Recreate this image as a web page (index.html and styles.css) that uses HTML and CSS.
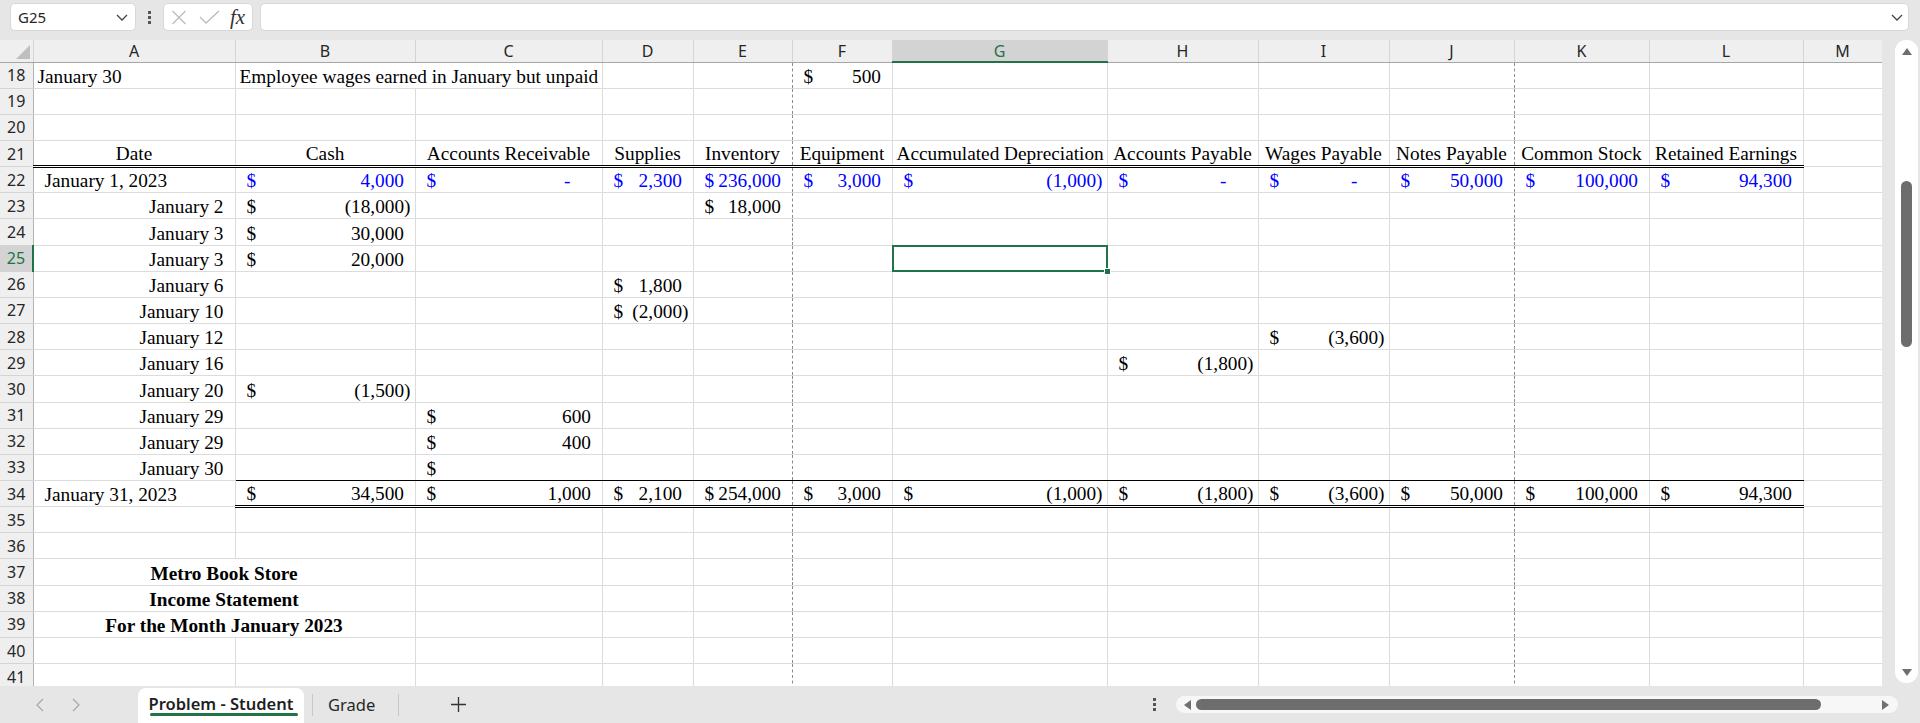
FILE: index.html
```html
<!DOCTYPE html>
<html lang="en">
    <head>
        <meta charset="utf-8">
        <title>Problem - Student</title>

        <link rel="stylesheet" href="styles.css">
    </head>

    <body>
        <div class="topbar">
            <div class="namebox">
                <span>G25</span>
                <svg class="chev" width="12" height="7" viewBox="0 0 12 7"><path d="M1 1l5 5 5-5"/></svg>
            </div>

            <div class="grip"><i></i><i></i><i></i></div>

            <div class="fxbox">
                <svg class="cancel" width="16" height="15" viewBox="0 0 16 15"><path d="M1.5 1l13 13M14.5 1l-13 13"/></svg>
                <svg class="enter" width="21" height="14" viewBox="0 0 21 14"><path d="M1 7l6 6L20 1"/></svg>
                <span class="fx">fx</span>
            </div>

            <div class="formula">
                <svg class="chev" width="12" height="7" viewBox="0 0 12 7"><path d="M1 1l5 5 5-5"/></svg>
            </div>
        </div>

        <div class="main">
            <div class="sheet">
                <table class="grid">
                    <colgroup>
                        <col class="w-rh"><col class="w-a"><col class="w-b"><col class="w-c"><col class="w-d"><col class="w-e"><col class="w-f">
                        <col class="w-g"><col class="w-h"><col class="w-i"><col class="w-j"><col class="w-k"><col class="w-l"><col class="w-m">
                    </colgroup>

                    <thead>
                        <tr>
                            <th class="corner"><svg width="14" height="14" viewBox="0 0 14 14"><path d="M14 0V14H0z"/></svg></th>
                            <th>A</th><th>B</th><th>C</th><th>D</th><th>E</th><th>F</th>
                            <th class="on">G</th><th>H</th><th>I</th><th>J</th><th>K</th><th>L</th><th>M</th>
                        </tr>
                    </thead>

                    <tbody>
                        <tr>
                            <th>18</th>
                            <td>January 30</td>
                            <td class="spill">Employee wages earned in January but unpaid</td>
                            <td></td><td></td><td class="pb"></td>
                            <td class="num"><span class="cur">$</span>500</td>
                            <td></td><td></td><td></td><td class="pb"></td><td></td><td></td><td></td>
                        </tr>
                        <tr>
                            <th>19</th>
                            <td></td><td></td><td></td><td></td><td class="pb"></td><td></td><td></td><td></td><td></td><td class="pb"></td><td></td><td></td><td></td>
                        </tr>
                        <tr>
                            <th>20</th>
                            <td></td><td></td><td></td><td></td><td class="pb"></td><td></td><td></td><td></td><td></td><td class="pb"></td><td></td><td></td><td></td>
                        </tr>
                        <tr>
                            <th>21</th>
                            <td class="ctr hd">Date</td>
                            <td class="ctr hd">Cash</td>
                            <td class="ctr hd">Accounts Receivable</td>
                            <td class="ctr hd">Supplies</td>
                            <td class="ctr hd pb">Inventory</td>
                            <td class="ctr hd">Equipment</td>
                            <td class="ctr hd">Accumulated Depreciation</td>
                            <td class="ctr hd">Accounts Payable</td>
                            <td class="ctr hd">Wages Payable</td>
                            <td class="ctr hd pb">Notes Payable</td>
                            <td class="ctr hd">Common Stock</td>
                            <td class="ctr hd">Retained Earnings</td>
                            <td></td>
                        </tr>
                        <tr class="blue">
                            <th>22</th>
                            <td class="ind">January 1, 2023</td>
                            <td class="num"><span class="cur">$</span>4,000</td>
                            <td class="num zero"><span class="cur">$</span>-</td>
                            <td class="num"><span class="cur">$</span>2,300</td>
                            <td class="num pb"><span class="cur">$</span>236,000</td>
                            <td class="num"><span class="cur">$</span>3,000</td>
                            <td class="num neg"><span class="cur">$</span>(1,000)</td>
                            <td class="num zero"><span class="cur">$</span>-</td>
                            <td class="num zero"><span class="cur">$</span>-</td>
                            <td class="num pb"><span class="cur">$</span>50,000</td>
                            <td class="num"><span class="cur">$</span>100,000</td>
                            <td class="num"><span class="cur">$</span>94,300</td>
                            <td></td>
                        </tr>
                        <tr>
                            <th>23</th>
                            <td class="rt">January 2</td>
                            <td class="num neg"><span class="cur">$</span>(18,000)</td>
                            <td></td><td></td>
                            <td class="num pb"><span class="cur">$</span>18,000</td>
                            <td></td><td></td><td></td><td></td><td class="pb"></td><td></td><td></td><td></td>
                        </tr>
                        <tr>
                            <th>24</th>
                            <td class="rt">January 3</td>
                            <td class="num"><span class="cur">$</span>30,000</td>
                            <td></td><td></td><td class="pb"></td><td></td><td></td><td></td><td></td><td class="pb"></td><td></td><td></td><td></td>
                        </tr>
                        <tr>
                            <th class="on">25</th>
                            <td class="rt">January 3</td>
                            <td class="num"><span class="cur">$</span>20,000</td>
                            <td></td><td></td><td class="pb"></td><td></td>
                            <td class="sel"></td>
                            <td></td><td></td><td class="pb"></td><td></td><td></td><td></td>
                        </tr>
                        <tr>
                            <th>26</th>
                            <td class="rt">January 6</td>
                            <td></td><td></td>
                            <td class="num"><span class="cur">$</span>1,800</td>
                            <td class="pb"></td><td></td><td></td><td></td><td></td><td class="pb"></td><td></td><td></td><td></td>
                        </tr>
                        <tr>
                            <th>27</th>
                            <td class="rt">January 10</td>
                            <td></td><td></td>
                            <td class="num neg"><span class="cur">$</span>(2,000)</td>
                            <td class="pb"></td><td></td><td></td><td></td><td></td><td class="pb"></td><td></td><td></td><td></td>
                        </tr>
                        <tr>
                            <th>28</th>
                            <td class="rt">January 12</td>
                            <td></td><td></td><td></td><td class="pb"></td><td></td><td></td><td></td>
                            <td class="num neg"><span class="cur">$</span>(3,600)</td>
                            <td class="pb"></td><td></td><td></td><td></td>
                        </tr>
                        <tr>
                            <th>29</th>
                            <td class="rt">January 16</td>
                            <td></td><td></td><td></td><td class="pb"></td><td></td><td></td>
                            <td class="num neg"><span class="cur">$</span>(1,800)</td>
                            <td></td><td class="pb"></td><td></td><td></td><td></td>
                        </tr>
                        <tr>
                            <th>30</th>
                            <td class="rt">January 20</td>
                            <td class="num neg"><span class="cur">$</span>(1,500)</td>
                            <td></td><td></td><td class="pb"></td><td></td><td></td><td></td><td></td><td class="pb"></td><td></td><td></td><td></td>
                        </tr>
                        <tr>
                            <th>31</th>
                            <td class="rt">January 29</td>
                            <td></td>
                            <td class="num"><span class="cur">$</span>600</td>
                            <td></td><td class="pb"></td><td></td><td></td><td></td><td></td><td class="pb"></td><td></td><td></td><td></td>
                        </tr>
                        <tr>
                            <th>32</th>
                            <td class="rt">January 29</td>
                            <td></td>
                            <td class="num"><span class="cur">$</span>400</td>
                            <td></td><td class="pb"></td><td></td><td></td><td></td><td></td><td class="pb"></td><td></td><td></td><td></td>
                        </tr>
                        <tr>
                            <th>33</th>
                            <td class="rt">January 30</td>
                            <td class="sub"></td>
                            <td class="num sub"><span class="cur">$</span></td>
                            <td class="sub"></td><td class="sub pb"></td><td class="sub"></td><td class="sub"></td><td class="sub"></td>
                            <td class="sub"></td><td class="sub pb"></td><td class="sub"></td><td class="sub"></td><td></td>
                        </tr>
                        <tr>
                            <th>34</th>
                            <td class="ind">January 31, 2023</td>
                            <td class="num tot"><span class="cur">$</span>34,500</td>
                            <td class="num tot"><span class="cur">$</span>1,000</td>
                            <td class="num tot"><span class="cur">$</span>2,100</td>
                            <td class="num tot pb"><span class="cur">$</span>254,000</td>
                            <td class="num tot"><span class="cur">$</span>3,000</td>
                            <td class="num neg tot"><span class="cur">$</span>(1,000)</td>
                            <td class="num neg tot"><span class="cur">$</span>(1,800)</td>
                            <td class="num neg tot"><span class="cur">$</span>(3,600)</td>
                            <td class="num tot pb"><span class="cur">$</span>50,000</td>
                            <td class="num tot"><span class="cur">$</span>100,000</td>
                            <td class="num tot"><span class="cur">$</span>94,300</td>
                            <td></td>
                        </tr>
                        <tr>
                            <th>35</th>
                            <td></td><td></td><td></td><td></td><td class="pb"></td><td></td><td></td><td></td><td></td><td class="pb"></td><td></td><td></td><td></td>
                        </tr>
                        <tr>
                            <th>36</th>
                            <td></td><td></td><td></td><td></td><td class="pb"></td><td></td><td></td><td></td><td></td><td class="pb"></td><td></td><td></td><td></td>
                        </tr>
                        <tr>
                            <th>37</th>
                            <td colspan="2" class="ctr bold">Metro Book Store</td>
                            <td></td><td></td><td class="pb"></td><td></td><td></td><td></td><td></td><td class="pb"></td><td></td><td></td><td></td>
                        </tr>
                        <tr>
                            <th>38</th>
                            <td colspan="2" class="ctr bold">Income Statement</td>
                            <td></td><td></td><td class="pb"></td><td></td><td></td><td></td><td></td><td class="pb"></td><td></td><td></td><td></td>
                        </tr>
                        <tr>
                            <th>39</th>
                            <td colspan="2" class="ctr bold">For the Month January 2023</td>
                            <td></td><td></td><td class="pb"></td><td></td><td></td><td></td><td></td><td class="pb"></td><td></td><td></td><td></td>
                        </tr>
                        <tr>
                            <th>40</th>
                            <td></td><td></td><td></td><td></td><td class="pb"></td><td></td><td></td><td></td><td></td><td class="pb"></td><td></td><td></td><td></td>
                        </tr>
                        <tr>
                            <th>41</th>
                            <td></td><td></td><td></td><td></td><td class="pb"></td><td></td><td></td><td></td><td></td><td class="pb"></td><td></td><td></td><td></td>
                        </tr>
                    </tbody>
                </table>
            </div>

            <div class="vscroll">
                <div class="vtrack">
                    <svg class="arrow" width="10" height="7" viewBox="0 0 10 7"><path d="M5 0L10 7H0z"/></svg>
                    <div class="vthumb"></div>
                    <svg class="arrow down" width="10" height="7" viewBox="0 0 10 7"><path d="M0 0H10L5 7z"/></svg>
                </div>
            </div>
        </div>

        <div class="tabbar">
            <div class="navs">
                <svg width="8" height="14" viewBox="0 0 8 14"><path d="M7 1L1 7l6 6"/></svg>
                <svg width="8" height="14" viewBox="0 0 8 14"><path d="M1 1l6 6-6 6"/></svg>
            </div>

            <div class="tab active">Problem - Student</div>
            <div class="sep"></div>
            <div class="tab">Grade</div>
            <div class="sep"></div>

            <svg class="add" width="15" height="15" viewBox="0 0 15 15"><path d="M7.5 0V15M0 7.5H15"/></svg>

            <div class="grip small"><i></i><i></i><i></i></div>

            <div class="htrack">
                <svg class="arrow" width="7" height="10" viewBox="0 0 7 10"><path d="M7 0V10L0 5z"/></svg>
                <div class="hthumb"></div>
                <svg class="arrow" width="7" height="10" viewBox="0 0 7 10"><path d="M0 0L7 5 0 10z"/></svg>
            </div>
        </div>
    </body>
</html>
```

FILE: styles.css
```css
body {
    margin: 0;
    padding: 0;
    width: 1920px;
    height: 723px;
    overflow: hidden;

    font-family: "Noto Sans", Arial, sans-serif;
    background-color: #e6e6e6;
    color: #262626;
}

/* formula bar */

.topbar {
    display: flex;
    height: 40px;
    box-sizing: border-box;
    padding: 3px 11px 0 10px;
}

.namebox, .fxbox, .formula {
    display: flex;
    align-items: center;
    height: 28px;
    box-sizing: border-box;
    border: 1px solid #d8d8d8;
    border-radius: 5px;
    background-color: #fff;
}

.namebox {
    width: 126px;
    justify-content: space-between;
    padding: 0 7px 0 7px;
    font-size: 15px;
}

.chev path {
    fill: none;
    stroke: #444;
    stroke-width: 1.3;
}

.grip {
    display: flex;
    flex-direction: column;
    justify-content: center;
    align-items: center;
    gap: 2px;
    width: 27px;
    height: 28px;
}

.grip i {
    width: 3px;
    height: 3px;
    background-color: #555;
}

.fxbox {
    width: 90px;
    padding-left: 7px;
}

.cancel path, .enter path {
    fill: none;
    stroke: #bdbdbd;
    stroke-width: 1.3;
}

.enter {
    margin-left: 12px;
}

.fx {
    margin-left: 10px;
    font-family: "Liberation Serif", serif;
    font-style: italic;
    font-size: 21px;
    color: #333;
}

.formula {
    flex-grow: 1;
    margin-left: 7px;
    justify-content: flex-end;
    padding-right: 5px;
}

/* sheet */

.main {
    display: flex;
    height: 646px;
}

.sheet {
    width: 1882px;
    overflow: hidden;
    background-color: #fff;
}

.grid {
    width: 1882px;
    border-collapse: collapse;
    table-layout: fixed;
    font-family: "Liberation Serif", "Times New Roman", serif;
    font-size: 19.3px;
    color: #000;
}

.w-rh { width: 33px; }
.w-a { width: 202px; }
.w-b { width: 180px; }
.w-c { width: 187px; }
.w-d { width: 91px; }
.w-e { width: 99px; }
.w-f { width: 100px; }
.w-g { width: 215px; }
.w-h { width: 151px; }
.w-i { width: 131px; }
.w-j { width: 125px; }
.w-k { width: 135px; }
.w-l { width: 154px; }
.w-m { width: 79px; }

.grid th {
    padding: 0;
    font-family: "Noto Sans", Arial, sans-serif;
    font-size: 16px;
    font-weight: normal;
    color: #262626;
    background-color: #efefef;
    text-align: center;
    vertical-align: middle;
}

.grid thead tr {
    height: 22px;
}

.grid thead th {
    border-right: 1px solid #d4d4d4;
    border-bottom: 1px solid #a6a6a6;
    line-height: 20px;
}

.grid thead th.on {
    background-color: #d3d3d3;
    color: #217346;
    border-bottom: 2px solid #217346;
}

.grid th.corner {
    text-align: right;
    vertical-align: bottom;
    padding: 0 3px 3px 0;
    line-height: 0;
}

.corner path {
    fill: #bfbfbf;
}

.grid tbody tr {
    height: 26.16px;
}

.grid tbody th {
    border-right: 1px solid #b4b4b4;
    border-bottom: 1px solid #d4d4d4;
    line-height: 20px;
}

.grid tbody th.on {
    background-color: #d3d3d3;
    color: #217346;
    border-right: 2px solid #217346;
}

.grid td {
    padding: 0 4px 1px 4px;
    border-right: 1px solid #dcdcdc;
    border-bottom: 1px solid #dcdcdc;
    white-space: nowrap;
    overflow: visible;
    vertical-align: bottom;
    line-height: 21px;
}

.grid td.spill {
    border-right-style: hidden;
}

.grid td.pb {
    border-right: 1px dashed #8c8c8c;
}

.ctr {
    text-align: center;
}

.bold {
    font-weight: bold;
}

.ind {
    padding-left: 11px !important;
}

.rt {
    text-align: right;
    padding-right: 11px !important;
}

.num {
    text-align: right;
    padding: 0 10.5px 1px 11px !important;
}

.num.neg {
    padding-right: 4px !important;
}

.num.zero {
    padding-right: 31px !important;
}

.cur {
    float: left;
}

.blue .num {
    color: #0000ff;
}

.grid td.hd {
    border-bottom: 3px double #000;
}

.grid td.sub {
    border-bottom: 1px solid #000;
}

.grid td.tot {
    border-bottom: 3px double #000;
}

.grid td.sel {
    position: relative;
}

.sel::after {
    content: "";
    position: absolute;
    left: -1px;
    top: -1px;
    right: -1px;
    bottom: -1px;
    border: 2px solid #217346;
}

.sel::before {
    content: "";
    position: absolute;
    right: -4px;
    bottom: -4px;
    width: 5px;
    height: 5px;
    background-color: #217346;
    border: 1px solid #fff;
    z-index: 1;
}

/* scroll bars */

.vscroll {
    width: 38px;
    box-sizing: border-box;
    padding: 0 2px 3px 13px;
}

.vtrack {
    display: flex;
    flex-direction: column;
    align-items: center;
    height: 100%;
    border-radius: 11px;
    background-color: #fff;
}

.arrow path {
    fill: #6f6f6f;
}

.vtrack .arrow {
    margin-top: 8px;
}

.vthumb {
    width: 11px;
    height: 166px;
    margin-top: 126px;
    border-radius: 6px;
    background-color: #6d6d6d;
}

.vtrack .arrow.down {
    margin-top: auto;
    margin-bottom: 7px;
}

/* sheet tabs */

.tabbar {
    display: flex;
    align-items: center;
    height: 37px;
}

.navs {
    display: flex;
    align-items: center;
    gap: 28px;
    width: 138px;
    box-sizing: border-box;
    padding-left: 36px;
}

.navs path {
    fill: none;
    stroke: #a6a6a6;
    stroke-width: 1.2;
}

.tab {
    display: flex;
    align-items: center;
    height: 37px;
    padding: 0 15px;
    box-sizing: border-box;
    font-size: 16.5px;
    color: #262626;
}

.tab.active {
    position: relative;
    width: 166px;
    justify-content: center;
    align-self: flex-end;
    height: 35px;
    padding: 0 0 4px 0;
    border-radius: 8px 8px 0 0;
    background-color: #fff;
    font-weight: 600;
    color: #1f1f1f;
}

.tab.active::after {
    content: "";
    position: absolute;
    left: 12px;
    right: 6px;
    bottom: 7px;
    height: 3px;
    border-radius: 2px;
    background-color: #217346;
}

.sep {
    width: 1px;
    height: 22px;
    margin-left: 8px;
    background-color: #c8c8c8;
}

.sep + .tab {
    padding-left: 15px;
}

.add {
    margin-left: 52px;
}

.add path {
    fill: none;
    stroke: #333;
    stroke-width: 1.3;
}

.grip.small {
    width: 4px;
    margin-left: auto;
    gap: 2px;
}

.grip.small i {
    width: 3px;
    height: 3px;
}

.htrack {
    display: flex;
    align-items: center;
    gap: 5px;
    width: 722px;
    height: 17px;
    box-sizing: border-box;
    margin: 0 22px 0 20px;
    padding: 0 9px 0 8px;
    border-radius: 9px;
    background-color: #f7f7f7;
}

.hthumb {
    flex-grow: 1;
    height: 11px;
    margin-right: 56px;
    border-radius: 6px;
    background-color: #6d6d6d;
}
```
